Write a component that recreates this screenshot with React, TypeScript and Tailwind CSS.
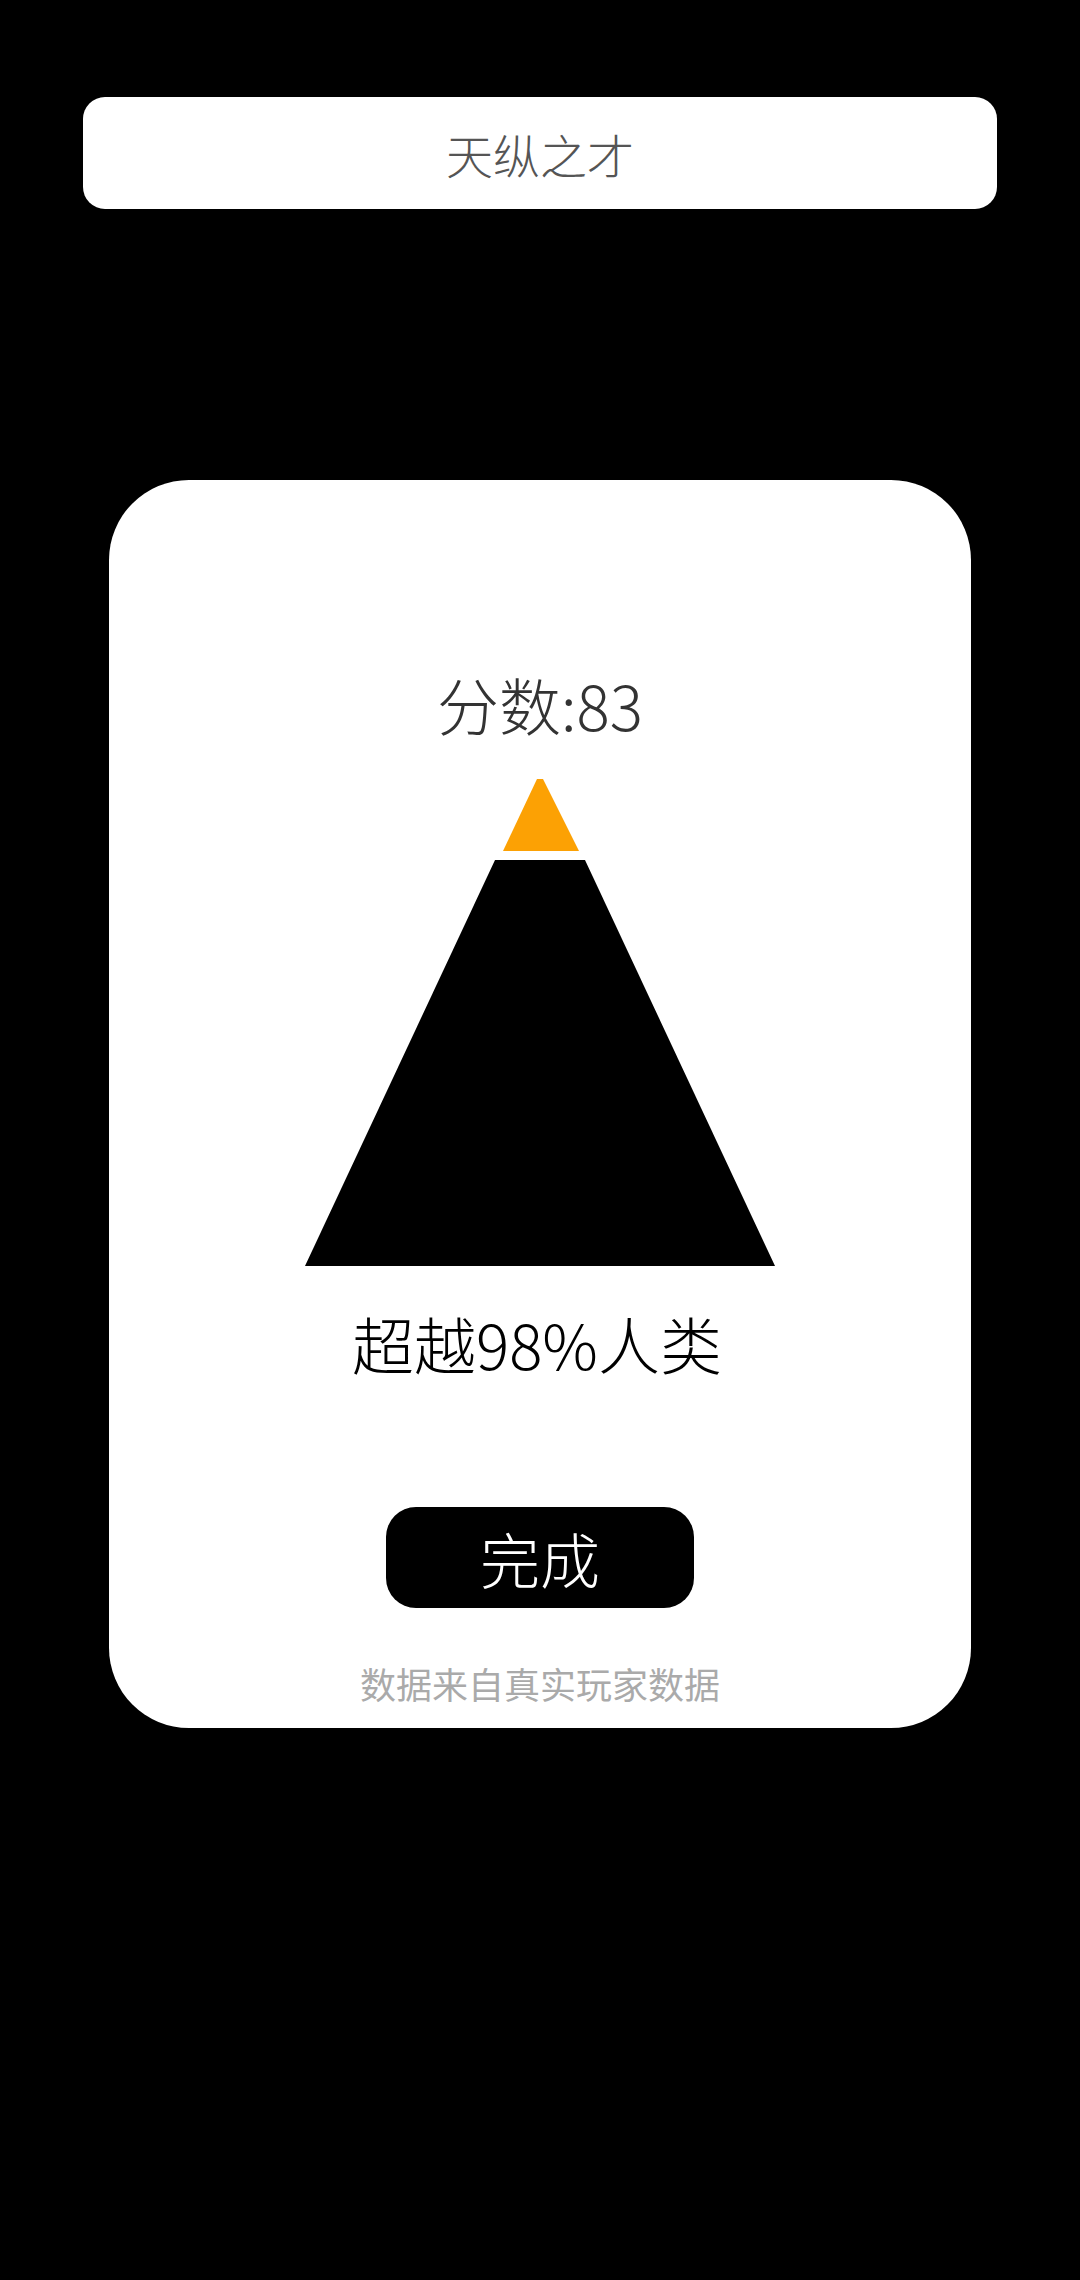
const cjk = { fontFamily: '"Noto Sans CJK SC", "Noto Sans", sans-serif' };

function Pyramid() {
  return (
    <svg width="470" height="488" viewBox="0 0 470 488" className="block">
      <polygon points="198,73 274,73 238,1 232,1" fill="#fca104" />
      <polygon points="190,82 280,82 470,488 0,488" fill="#000000" />
    </svg>
  );
}

export default function App() {
  return (
    <div className="min-h-[2280px] w-full bg-black pt-[97px]" style={cjk}>
      <div className="mx-[83px] flex h-[112px] items-center justify-center rounded-[22px] bg-white">
        <span className="text-[47px] font-light leading-none text-[#555555]">天纵之才</span>
      </div>

      <div className="mx-[109px] mt-[271px] flex h-[1248px] flex-col items-center rounded-[80px] bg-white pt-[193px]">
        <div className="text-[62px] font-light leading-none text-[#333333]">分数:83</div>
        <div className="mt-[43px]">
          <Pyramid />
        </div>
        <div className="mt-[46px] pr-[6px] text-[62px] font-light leading-none text-black">超越98%人类</div>
        <button className="mt-[133px] flex h-[101px] w-[308px] items-center justify-center rounded-[30px] bg-black">
          <span className="text-[60px] font-light leading-none text-white">完成</span>
        </button>
        <div className="mt-[57px] text-[36px] leading-none text-[#aaaaaa]">数据来自真实玩家数据</div>
      </div>
    </div>
  );
}
